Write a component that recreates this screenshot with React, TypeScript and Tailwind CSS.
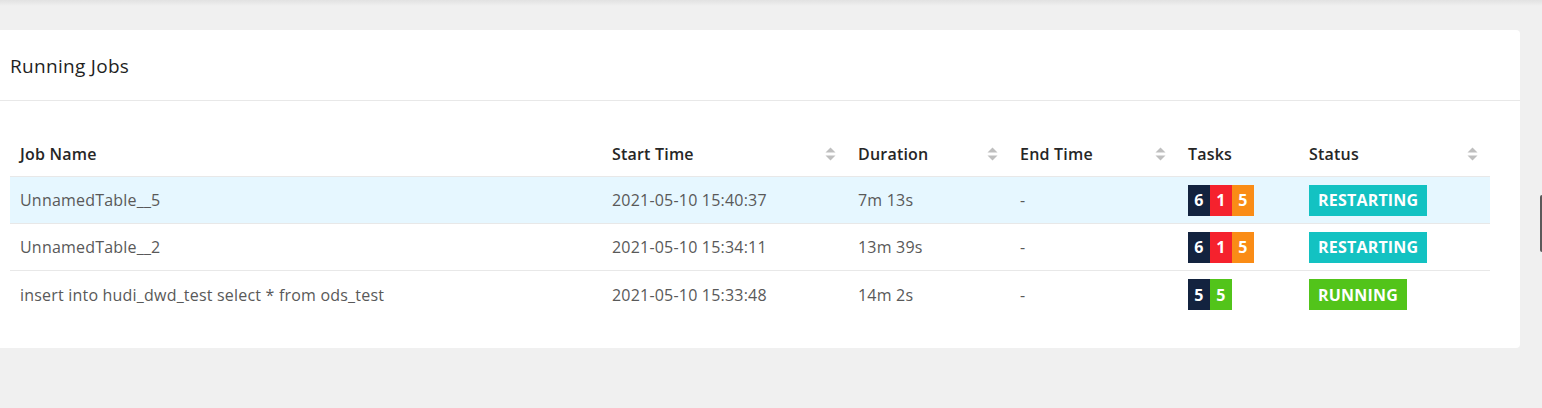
import React from 'react';

type Job = {
  name: string;
  start: string;
  duration: string;
  end: string;
  tasks: { n: number; color: string }[];
  status: 'RESTARTING' | 'RUNNING';
};

const jobs: Job[] = [
  {
    name: 'UnnamedTable__5',
    start: '2021-05-10 15:40:37',
    duration: '7m 13s',
    end: '-',
    tasks: [
      { n: 6, color: 'bg-[#13233f]' },
      { n: 1, color: 'bg-[#f5222d]' },
      { n: 5, color: 'bg-[#fa8c16]' },
    ],
    status: 'RESTARTING',
  },
  {
    name: 'UnnamedTable__2',
    start: '2021-05-10 15:34:11',
    duration: '13m 39s',
    end: '-',
    tasks: [
      { n: 6, color: 'bg-[#13233f]' },
      { n: 1, color: 'bg-[#f5222d]' },
      { n: 5, color: 'bg-[#fa8c16]' },
    ],
    status: 'RESTARTING',
  },
  {
    name: 'insert into hudi_dwd_test select * from ods_test',
    start: '2021-05-10 15:33:48',
    duration: '14m 2s',
    end: '-',
    tasks: [
      { n: 5, color: 'bg-[#13233f]' },
      { n: 5, color: 'bg-[#52c41a]' },
    ],
    status: 'RUNNING',
  },
];

const SortIcon = () => (
  <svg width="11" height="14" viewBox="0 0 11 14" className="shrink-0">
    <path d="M5.5 0.5 L10.5 5.5 L0.5 5.5 Z" fill="#bfbfbf" />
    <path d="M0.5 8.5 L10.5 8.5 L5.5 13.5 Z" fill="#bfbfbf" />
  </svg>
);

const cols = [
  { label: 'Job Name', w: 'w-[592px]', sort: false },
  { label: 'Start Time', w: 'w-[246px]', sort: true },
  { label: 'Duration', w: 'w-[162px]', sort: true },
  { label: 'End Time', w: 'w-[168px]', sort: true },
  { label: 'Tasks', w: 'w-[121px]', sort: false },
  { label: 'Status', w: 'w-[191px]', sort: true },
];

export default function App() {
  return (
    <div
      className="relative h-[408px] w-[1542px] overflow-hidden bg-[#f0f0f0] text-[16px] tracking-[0.2px]"
      style={{ fontFamily: '"Open Sans", "Noto Sans", sans-serif' }}
    >
      {/* top shadow */}
      <div className="h-[6px] bg-gradient-to-b from-[#e2e2e2] to-[#f0f0f0]" />
      <div className="pt-[24px]">
        <div className="w-[1520px] rounded-r bg-white">
          <div className="flex h-[71px] items-center border-b border-[#e8e8e8] px-[10px] pt-[3px] text-[19px] tracking-[0.3px] text-[#1f1f1f]">
            Running Jobs
          </div>
          <div className="pb-[30px] pl-[10px] pt-[30px]">
            <div className="w-[1480px]">
              <div className="flex h-[46px] items-center border-b border-[#e8e8e8] font-semibold text-[#262626]">
                {cols.map((c) => (
                  <div key={c.label} className={`${c.w} flex items-center justify-between pl-[10px] pr-[12px]`}>
                    <span>{c.label}</span>
                    {c.sort && <SortIcon />}
                  </div>
                ))}
              </div>
              {jobs.map((j, i) => (
                <div
                  key={j.name}
                  className={`flex h-[47px] items-center text-[#595959] ${i === 0 ? 'bg-[#e6f7ff]' : ''} ${i < jobs.length - 1 ? 'border-b border-[#e8e8e8]' : ''}`}
                >
                  <div className="w-[592px] pl-[10px]">{j.name}</div>
                  <div className="w-[246px] pl-[10px]">{j.start}</div>
                  <div className="w-[162px] pl-[10px]">{j.duration}</div>
                  <div className="w-[168px] pl-[10px]">{j.end}</div>
                  <div className="flex w-[121px] pl-[10px]">
                    {j.tasks.map((t, k) => (
                      <span
                        key={k}
                        className={`${t.color} flex h-[31px] w-[22px] items-center justify-center font-bold text-white`}
                      >
                        {t.n}
                      </span>
                    ))}
                  </div>
                  <div className="w-[191px] pl-[10px]">
                    <span
                      className={`inline-flex h-[31px] items-center px-[9px] font-bold text-white ${j.status === 'RUNNING' ? 'bg-[#52c41a]' : 'bg-[#13c2c2]'}`}
                    >
                      {j.status}
                    </span>
                  </div>
                </div>
              ))}
            </div>
          </div>
        </div>
      </div>
      {/* edge handle */}
      <div className="absolute right-0 top-[195px] h-[57px] w-[2px] rounded-l-sm bg-[#5a5a5a]" />
    </div>
  );
}
